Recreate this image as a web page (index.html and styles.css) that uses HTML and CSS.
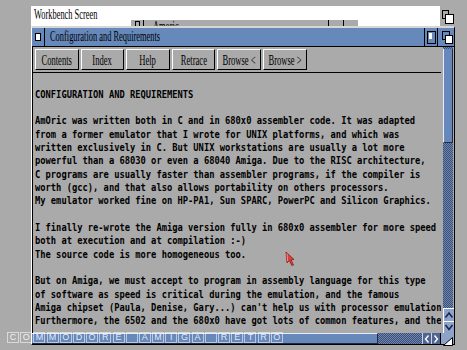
FILE: index.html
```html
<!DOCTYPE html>
<html lang="en">
<head>
    <meta charset="UTF-8">
    <meta name="viewport" content="width=device-width, initial-scale=1.0">
    <title>Configuration and Requirements</title>
    <link rel="stylesheet" href="styles.css">
</head>
<body>
    <div class="screen">
        <div class="screen-bar">
            <div class="screen-title"><span class="sq">Workbench Screen</span></div>
            <div class="screen-depth">
                <svg width="15" height="20" viewBox="0 0 15 20">
                    <rect x="2.5" y="4.5" width="6" height="8" fill="none" stroke="#000"/>
                    <rect x="5.5" y="8.5" width="8" height="9" fill="#fff" stroke="#000"/>
                </svg>
            </div>
        </div>

        <div class="back-window">
            <div class="back-close"><span class="back-close-box"></span></div>
            <div class="back-title"><span class="sq">Amoric</span></div>
            <div class="back-gadget">
                <svg width="14" height="9" viewBox="0 0 14 9">
                    <rect x="3.5" y="3.5" width="7" height="8" fill="none" stroke="#000"/>
                    <line x1="7" y1="3" x2="7" y2="9" stroke="#000"/>
                </svg>
            </div>
            <div class="back-gadget">
                <svg width="14" height="9" viewBox="0 0 14 9">
                    <rect x="2.5" y="3.5" width="6" height="7" fill="none" stroke="#000"/>
                    <rect x="5.5" y="6.5" width="6" height="7" fill="#fff" stroke="#000"/>
                </svg>
            </div>
        </div>

        <div class="window">
            <div class="titlebar">
                <div class="close-gadget"><span class="close-box"></span></div>
                <div class="win-title"><span class="sq">Configuration and Requirements</span></div>
                <div class="zoom-gadget">
                    <svg width="12" height="18" viewBox="0 0 12 18">
                        <rect x="2.5" y="3.5" width="8" height="12" fill="none" stroke="#000"/>
                        <rect x="4" y="5" width="3" height="6" fill="#fff"/>
                    </svg>
                </div>
                <div class="depth-gadget">
                    <svg width="16" height="18" viewBox="0 0 16 18">
                        <rect x="4.5" y="3.5" width="7" height="8" fill="none" stroke="#000"/>
                        <rect x="7.5" y="7.5" width="7" height="8" fill="#fff" stroke="#000"/>
                    </svg>
                </div>
            </div>

            <div class="win-middle">
                <div class="win-main">
                    <div class="toolbar">
                        <button class="btn"><span class="btn-label">Contents</span></button>
                        <button class="btn"><span class="btn-label">Index</span></button>
                        <button class="btn"><span class="btn-label">Help</span></button>
                        <button class="btn"><span class="btn-label">Retrace</span></button>
                        <button class="btn"><span class="btn-label">Browse &lt;</span></button>
                        <button class="btn"><span class="btn-label">Browse &gt;</span></button>
                    </div>
                    <div class="text-area">
<pre class="doc">CONFIGURATION AND REQUIREMENTS

AmOric was written both in C and in 680x0 assembler code. It was adapted
from a former emulator that I wrote for UNIX platforms, and which was
written exclusively in C. But UNIX workstations are usually a lot more
powerful than a 68030 or even a 68040 Amiga. Due to the RISC architecture,
C programs are usually faster than assembler programs, if the compiler is
worth (gcc), and that also allows portability on others processors.
My emulator worked fine on HP-PA1, Sun SPARC, PowerPC and Silicon Graphics.

I finally re-wrote the Amiga version fully in 680x0 assembler for more speed
both at execution and at compilation :-)
The source code is more homogeneous too.

But on Amiga, we must accept to program in assembly language for this type
of software as speed is critical during the emulation, and the famous
Amiga chipset (Paula, Denise, Gary...) can't help us with processor emulation.
Furthermore, the 6502 and the 680x0 have got lots of common features, and they
</pre>
                    </div>
                </div>
                <div class="vscroll">
                    <div class="vprop"><div class="vknob"></div></div>
                    <div class="arrow arrow-up">
                        <svg width="10" height="12" viewBox="0 0 10 12"><polyline points="1.5,8.5 5,4 8.5,8.5" fill="none" stroke="#1a2450" stroke-width="1.6"/></svg>
                    </div>
                    <div class="arrow arrow-down">
                        <svg width="10" height="11" viewBox="0 0 10 11"><polyline points="1.5,3 5,7.5 8.5,3" fill="none" stroke="#1a2450" stroke-width="1.6"/></svg>
                    </div>
                </div>
            </div>

            <div class="hscroll">
                <div class="hprop"><div class="hknob"></div></div>
                <div class="harrow">
                    <svg width="8" height="10" viewBox="0 0 8 10"><polyline points="5.5,1.5 2.5,5 5.5,8.5" fill="none" stroke="#fff" stroke-width="1.4"/></svg>
                </div>
                <div class="harrow">
                    <svg width="8" height="10" viewBox="0 0 8 10"><polyline points="2.5,1.5 5.5,5 2.5,8.5" fill="none" stroke="#fff" stroke-width="1.4"/></svg>
                </div>
                <div class="size-gadget">
                    <svg width="13" height="11" viewBox="0 0 13 11"><polygon points="11.5,1.5 11.5,9.5 2.5,9.5" fill="#fff" stroke="#000"/></svg>
                </div>
            </div>
        </div>
    </div>

    <div class="watermark">
        <span>C</span><span>O</span><span>M</span><span>M</span><span>O</span><span>D</span><span>O</span><span>R</span><span>E</span><span></span><span>A</span><span>M</span><span>I</span><span>G</span><span>A</span><span></span><span>R</span><span>E</span><span>T</span><span>R</span><span>O</span>
    </div>

    <svg class="pointer" width="12" height="16" viewBox="0 0 12 16">
        <polygon points="1,1 9,8.5 6,8.8 8.5,14 6.8,14.6 4.4,9.6 2,11.8" fill="#d8403c" stroke="#8a1c1c" stroke-width="0.8"/>
        <polyline points="2,2.5 2.6,10" stroke="#f4a8a0" stroke-width="0.8" fill="none"/>
    </svg>
</body>
</html>
```

FILE: styles.css
```css
* {
    box-sizing: border-box;
}

body {
    margin: 0;
    width: 467px;
    height: 350px;
    overflow: hidden;
    position: relative;
    background-color: #aaaaaa;
    color: #000;
    font-family: "Liberation Serif", "Times New Roman", serif;
}

.screen {
    padding: 6px 12px 0 31px;
}

.sq {
    display: inline-block;
    white-space: nowrap;
    transform: scaleX(0.56);
    transform-origin: 0 50%;
}

/* screen title bar */

.screen-bar {
    display: flex;
    height: 20px;
}

.screen-title {
    flex: 1;
    background-color: #fff;
    padding-left: 3px;
    font-size: 15px;
    line-height: 17px;
}

.screen-depth {
    width: 15px;
    display: flex;
}

/* window behind */

.back-window {
    position: absolute;
    left: 130px;
    top: 19px;
    width: 228px;
    height: 10px;
    display: flex;
    overflow: hidden;
    background-color: #aaaaaa;
    border-top: 1px solid #fff;
    border-left: 1px solid #fff;
}

.back-close {
    width: 13px;
    border-right: 1px solid #000;
    padding: 1px 0 0 4px;
}

.back-close-box {
    display: block;
    width: 5px;
    height: 6px;
    border: 1px solid #000;
}

.back-title {
    flex: 1;
    padding-left: 9px;
    font-size: 15px;
    line-height: 12px;
}

.back-gadget {
    width: 15px;
    border-left: 1px solid #000;
}

/* main window */

.window {
    position: relative;
    width: 424px;
    height: 319px;
    display: flex;
    flex-direction: column;
    border-top: 2px solid #d6d6d6;
    border-left: 1px solid #fff;
    border-right: 1px solid #000;
    border-bottom: 1px solid #000;
    background-color: #aaaaaa;
}

.titlebar {
    display: flex;
    height: 19px;
    background-color: #6688bb;
    border-bottom: 1px solid #000;
}

.close-gadget {
    width: 13px;
    border-right: 1px solid #000;
    padding: 5px 0 0 3px;
}

.close-box {
    display: block;
    width: 6px;
    height: 8px;
    background-color: #fff;
    border: 1px solid #000;
}

.win-title {
    flex: 1;
    padding-left: 5px;
    font-size: 15px;
    line-height: 16px;
    overflow: hidden;
}

.zoom-gadget {
    width: 13px;
    border-left: 1px solid #000;
}

.depth-gadget {
    width: 17px;
    border-left: 1px solid #000;
}

.win-middle {
    display: flex;
    height: 286px;
}

.win-main {
    flex: 1;
    display: flex;
    flex-direction: column;
    border-left: 1px solid #000;
    min-width: 0;
}

.toolbar {
    display: flex;
    gap: 2px;
    height: 26px;
    padding: 2px 0 0 2px;
    border-bottom: 1px solid #000;
}

.btn {
    width: 43.6px;
    height: 21px;
    padding: 0;
    display: flex;
    align-items: center;
    justify-content: center;
    overflow: hidden;
    background-color: #aaaaaa;
    border: 1px solid;
    border-color: #fff #000 #000 #fff;
    font-family: "Liberation Serif", "Times New Roman", serif;
    font-size: 15px;
    line-height: 16px;
    color: #000;
}

.btn-label {
    display: inline-block;
    white-space: nowrap;
    transform: scaleX(0.57);
    transform-origin: 50% 50%;
}

.text-area {
    flex: 1;
    overflow: hidden;
    padding: 14.8px 0 0 2px;
}

.doc {
    margin: 0;
    width: max-content;
    font-family: "DejaVu Sans Mono", monospace;
    font-weight: bold;
    font-size: 11px;
    line-height: 13.33px;
    color: #000;
    transform: scaleX(0.797);
    transform-origin: 0 0;
}

/* scrollers */

.vscroll {
    width: 13px;
    display: flex;
    flex-direction: column;
    padding-left: 2px;
}

.vprop {
    flex: 1;
    width: 10px;
    padding-top: 2px;
    background: repeating-conic-gradient(#6d86b4 0 25%, #3e4d72 0 50%) 0 0 / 2px 2px;
}

.vknob {
    height: 94px;
    background-color: #6688bb;
    border-left: 1px solid #e8eef8;
    border-right: 1px solid #222a44;
    border-bottom: 1px solid #222a44;
}

.arrow {
    display: flex;
    justify-content: center;
    background-color: #8fa3c9;
    border-top: 1px solid #fff;
    border-left: 1px solid #fff;
}

.arrow-up {
    height: 13px;
}

.arrow-down {
    height: 12px;
}

.hscroll {
    display: flex;
    height: 11px;
}

.hprop {
    flex: 1;
    background: repeating-conic-gradient(#6d86b4 0 25%, #3e4d72 0 50%) 0 0 / 2px 2px;
}

.hknob {
    width: 346px;
    height: 100%;
    background-color: #6688bb;
    border-top: 1px solid #e8eef8;
    border-bottom: 1px solid #222a44;
    border-right: 1px solid #222a44;
}

.harrow {
    width: 9px;
    display: flex;
    align-items: center;
    justify-content: center;
    background-color: #4f6591;
    border-left: 1px solid #c8d4ea;
}

.size-gadget {
    width: 14px;
    background-color: #8fa3c9;
    border-left: 1px solid #000;
}

/* overlays */

.watermark {
    position: absolute;
    left: 7px;
    top: 332px;
    display: flex;
    gap: 1.2px;
}

.watermark span {
    width: 12px;
    height: 11px;
    display: flex;
    align-items: center;
    justify-content: center;
    border: 1px solid rgba(255, 255, 255, 0.55);
    color: rgba(255, 255, 255, 0.85);
    font-family: "Liberation Sans", Arial, sans-serif;
    font-size: 9px;
    line-height: 9px;
}

.pointer {
    position: absolute;
    left: 285px;
    top: 251px;
}
```
